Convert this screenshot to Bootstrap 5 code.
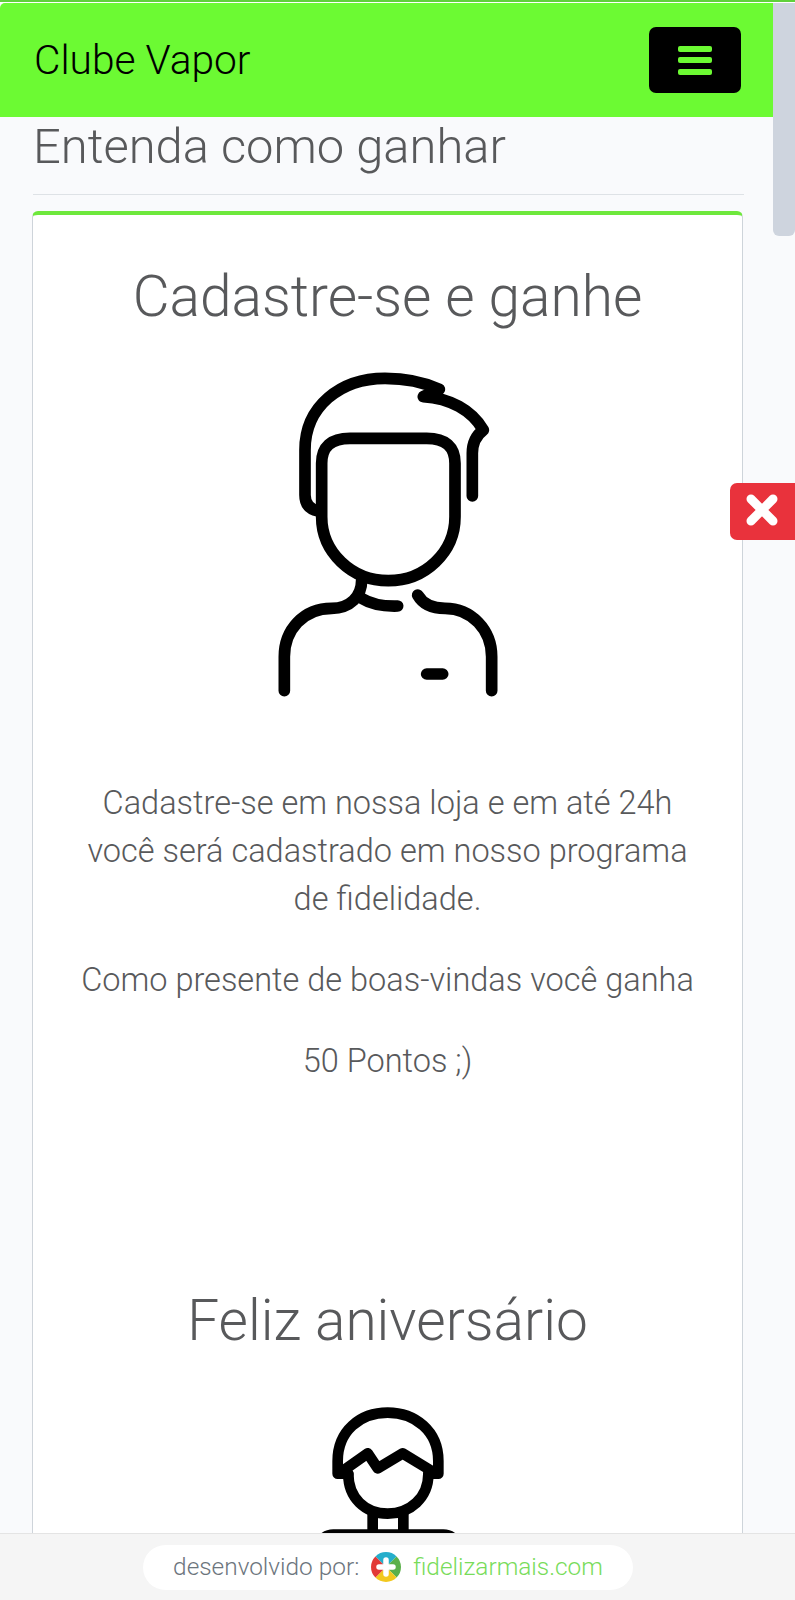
<!DOCTYPE html>
<html lang="pt-BR">
<head>
    <meta charset="UTF-8">
    <meta name="viewport" content="width=device-width, initial-scale=1.0">
    <title>Clube Vapor</title>
    <link href="https://cdn.jsdelivr.net/npm/bootstrap@5.3.0/dist/css/bootstrap.min.css" rel="stylesheet">
    <style>
        html, body { height: 1600px; overflow: hidden; }
        body { font-family: Roboto, "Liberation Sans", sans-serif; font-weight: 300; color: #58595b; background: #fff; }
        .page-shell { height: 1600px; border-top: 2px solid #5fd13a; padding-top: 1px; }
        .main-area { height: 1530px; overflow: hidden; }
        .page-col { width: 773px; background: #f9fafc; height: 100%; overflow: hidden; }
        .scroll-col { width: 22px; background: #f9fafc; }
        .scroll-thumb { height: 233px; background: #ced4de; border-radius: 0 0 6px 6px; }
        .green-bar { height: 114px; background: #6cfa33; border-radius: 5px 0 0 0; padding: 0 32px 0 34px; }
        .green-bar .navbar-brand { font-size: 40.7px; font-weight: 300; color: #000; padding: 1px 0 0; margin: 0; }
        .burger { width: 92px; height: 66px; background: #000; border: 0; border-radius: 7px; padding: 0; gap: 5.5px; }
        .burger span { display: block; width: 34px; height: 6px; background: #6cfa33; border-radius: 2px; }
        .page-title { font-size: 48.9px; font-weight: 300; line-height: 56px; margin: 2px 29px 0 33px; padding-bottom: 19px; border-bottom: 1px solid #dee2e6; }
        .rules-card { margin: 16px 30px 0 32px; border: 1px solid #ced4da; border-top: 4px solid #6ee83c; border-radius: 6px; background: #fff; }
        .rule-title { font-size: 56.8px; font-weight: 300; line-height: 68px; margin: 0; }
        .person-big { margin: 19px 0 0 5px; }
        .person-small { margin: 26px 0 0 25px; }
        .rule-text { font-size: 32.5px; line-height: 48px; margin: 0; }
        .rule-first { margin-top: 69px; padding: 0 48px; }
        .rule-next { margin-top: 33px; }
        .feliz-title { margin-top: 202px; }
        .close-tab { position: absolute; top: 483px; left: 730px; width: 65px; height: 57px; background: #e9323c; border: 0; border-radius: 7px 0 0 7px; padding: 0 2px 3px 0; }
        .foot-bar { height: 67px; background: #f5f5f5; border-top: 1px solid #e4e4e4; padding-right: 19px; }
        .foot-pill { width: 490px; height: 45px; background: #fff; border-radius: 23px; font-size: 24.4px; color: #6c757d; gap: 12px; }
        .foot-link { color: #78dc5a; text-decoration: none; }
    </style>
</head>
<body>
    <div class="page-shell">
        <div class="main-area d-flex">
            <div class="page-col">
                <!-- Navbar -->
                <nav class="navbar green-bar d-flex justify-content-between align-items-center">
                    <a class="navbar-brand" href="#">Clube Vapor</a>
                    <button class="burger d-flex flex-column justify-content-center align-items-center" type="button" aria-label="Menu">
                        <span></span><span></span><span></span>
                    </button>
                </nav>

                <h2 class="page-title">Entenda como ganhar</h2>

                <div class="card rules-card">
                    <div class="card-body text-center p-0">
                        <h3 class="rule-title mt-5">Cadastre-se e ganhe</h3>
                        <div class="d-flex justify-content-center person-big">
                            <svg width="280" height="360" viewBox="0 0 840 1080" fill="none" stroke="#000" stroke-width="35" stroke-linecap="round" stroke-linejoin="round">
                                <path d="M215 340 Q215 265 300 265 H530 Q615 265 615 340 V500 A200 192 0 0 1 215 500 Z"/>
                                <path d="M205 483 Q165 475 165 435 V300 C165 170 270 85 405 85 C470 85 525 98 568 118 L520 140 C600 145 665 180 700 240 C680 255 667 275 667 310 V438"/>
                                <path d="M335 690 C335 740 300 775 245 775 C160 775 103 840 103 920 V1022"/>
                                <path d="M335 745 Q375 770 443 768"/>
                                <path d="M503 735 C520 765 550 775 585 775 C665 775 725 840 725 920 V1022"/>
                                <path d="M530 972 H578"/>
                            </svg>
                        </div>
                        <p class="rule-text rule-first">Cadastre-se em nossa loja e em até 24h você será cadastrado em nosso programa de fidelidade.</p>
                        <p class="rule-text rule-next">Como presente de boas-vindas você ganha</p>
                        <p class="rule-text rule-next">50 Pontos ;)</p>
                        <h3 class="rule-title feliz-title">Feliz aniversário</h3>
                        <div class="d-flex justify-content-center person-small">
                            <svg width="200" height="200" viewBox="0 0 600 600" fill="none" stroke="#000" stroke-width="32" stroke-linecap="round" stroke-linejoin="round">
                                <path d="M113 278 V240 C113 150 180 95 263 95 C345 95 415 150 415 240 V278 H385 M145 278 H113"/>
                                <path d="M135 265 L203 217 L233 262 L308 217 L395 270"/>
                                <path d="M145 280 C145 350 195 398 263 398 C330 398 385 350 385 280"/>
                                <path d="M218 398 V470 M310 398 V470"/>
                                <path d="M35 500 Q55 445 100 445 H430 Q475 445 495 500 Z" fill="#000" stroke="none"/>
                            </svg>
                        </div>
                    </div>
                </div>
            </div>
            <div class="scroll-col"><div class="scroll-thumb"></div></div>
        </div>

        <footer class="foot-bar d-flex justify-content-center align-items-center">
            <div class="foot-pill d-flex justify-content-center align-items-center">
                <span>desenvolvido por:</span>
                <svg width="30" height="30" viewBox="0 0 30 30">
                    <path d="M15 15 L4.4 4.4 A15 15 0 0 1 25.6 4.4 Z" fill="#25aecb"/>
                    <path d="M15 15 L25.6 4.4 A15 15 0 0 1 25.6 25.6 Z" fill="#5bb04a"/>
                    <path d="M15 15 L25.6 25.6 A15 15 0 0 1 4.4 25.6 Z" fill="#f2c81e"/>
                    <path d="M15 15 L4.4 25.6 A15 15 0 0 1 4.4 4.4 Z" fill="#e23a36"/>
                    <path d="M15 8 V22 M8 15 H22" stroke="#fff" stroke-width="5.5" stroke-linecap="round"/>
                </svg>
                <a class="foot-link" href="#">fidelizarmais.com</a>
            </div>
        </footer>
    </div>

    <button class="close-tab d-flex justify-content-center align-items-center" type="button" aria-label="Fechar">
        <svg width="32" height="32" viewBox="0 0 32 32" stroke="#fff" stroke-width="9" stroke-linecap="round"><path d="M5 5 L27 27 M27 5 L5 27"/></svg>
    </button>

    <script src="https://cdn.jsdelivr.net/npm/bootstrap@5.3.0/dist/js/bootstrap.bundle.min.js"></script>
</body>
</html>
